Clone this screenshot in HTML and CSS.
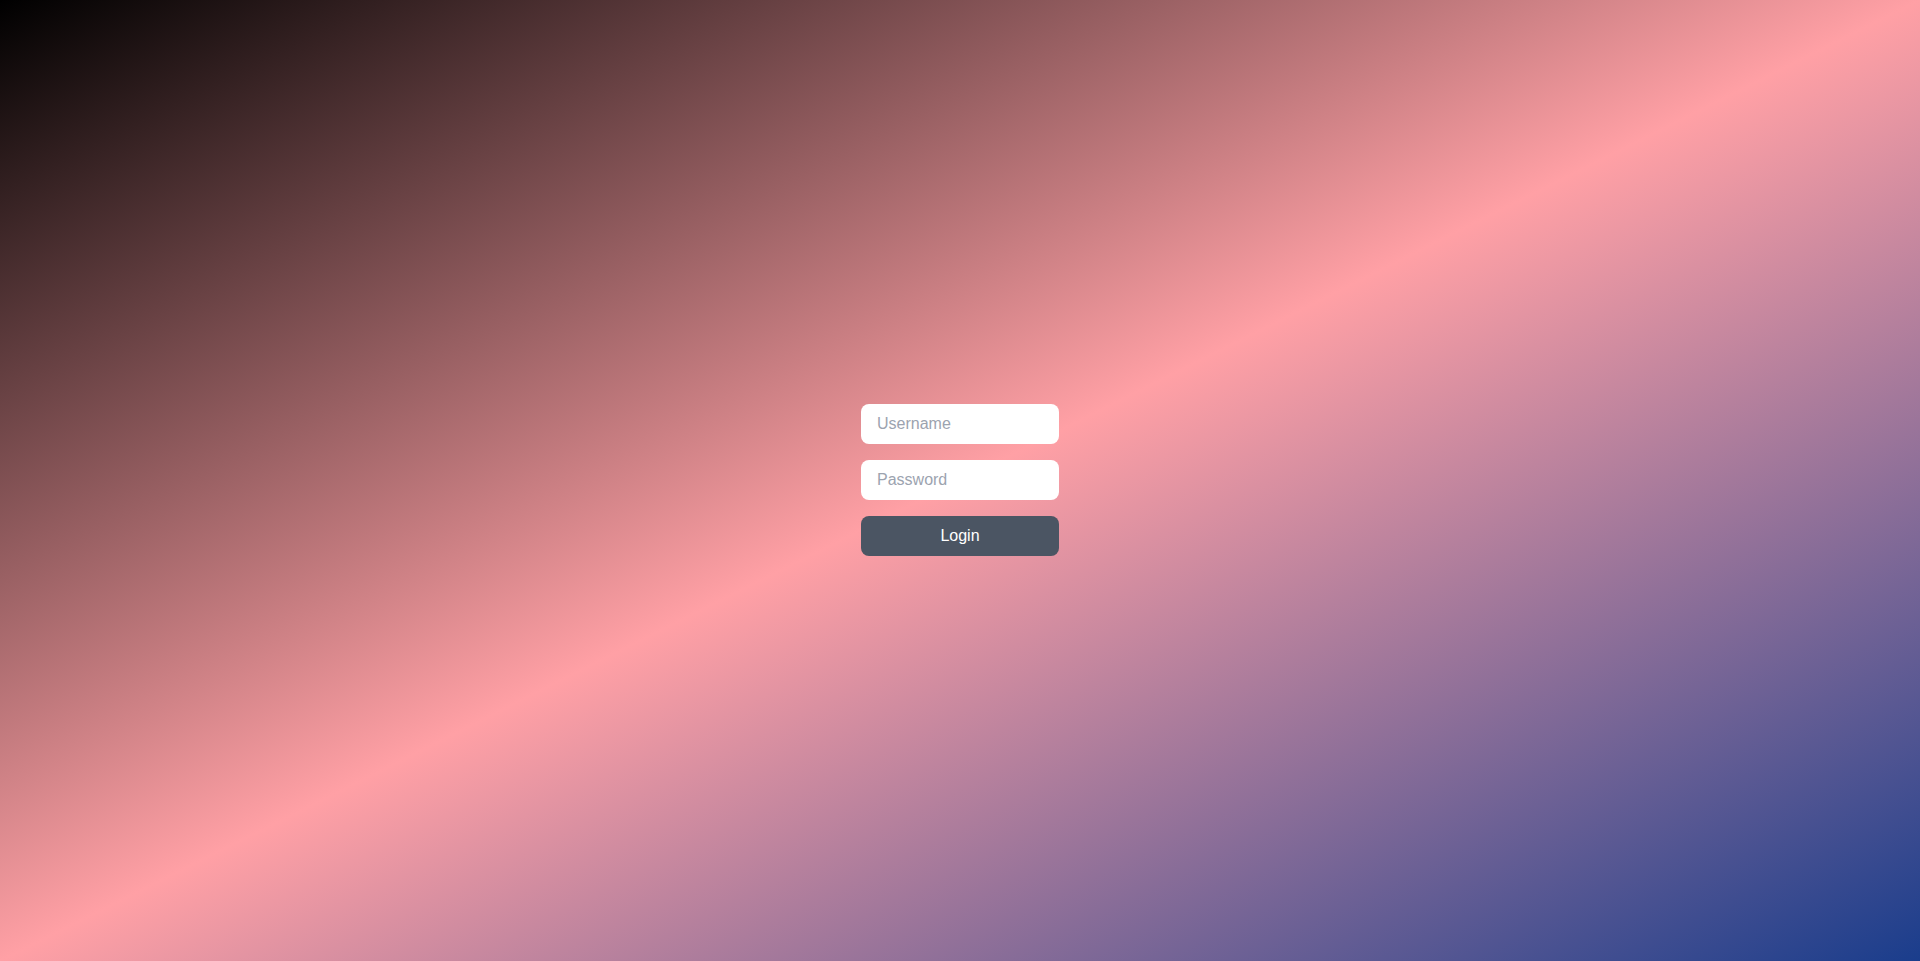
FILE: index.html
```html
<!DOCTYPE html>
<html lang="en">
<head>
<meta charset="utf-8">
<title>Login</title>
<link rel="stylesheet" href="styles.css">
</head>
<body>
<main class="page">
  <form class="login-form" onsubmit="return false">
    <input class="field" type="text" placeholder="Username">
    <input class="field" type="password" placeholder="Password">
    <button class="login-btn" type="submit">Login</button>
  </form>
</main>
</body>
</html>
```
FILE: styles.css
```css
html, body {
  margin: 0;
  padding: 0;
  height: 100%;
}
body {
  font-family: "Liberation Sans", Arial, Helvetica, sans-serif;
}
.page {
  box-sizing: border-box;
  height: 100vh;
  padding-bottom: 1px;
  display: flex;
  align-items: center;
  justify-content: center;
  background: linear-gradient(to bottom right, #000000, #ffa0a5, #1a3d8c);
}
.login-form {
  display: flex;
  flex-direction: column;
  gap: 16px;
  width: 198px;
}
.field {
  box-sizing: border-box;
  height: 40px;
  width: 100%;
  border: none;
  border-radius: 8px;
  background: #ffffff;
  padding: 0 16px;
  font-family: inherit;
  font-size: 16px;
  color: #1f2937;
  outline: none;
}
.field::placeholder {
  color: #9ca3af;
}
.login-btn {
  height: 40px;
  width: 100%;
  border: none;
  border-radius: 8px;
  background: #4b5563;
  color: #ffffff;
  font-family: inherit;
  font-size: 16px;
  cursor: pointer;
}
```
